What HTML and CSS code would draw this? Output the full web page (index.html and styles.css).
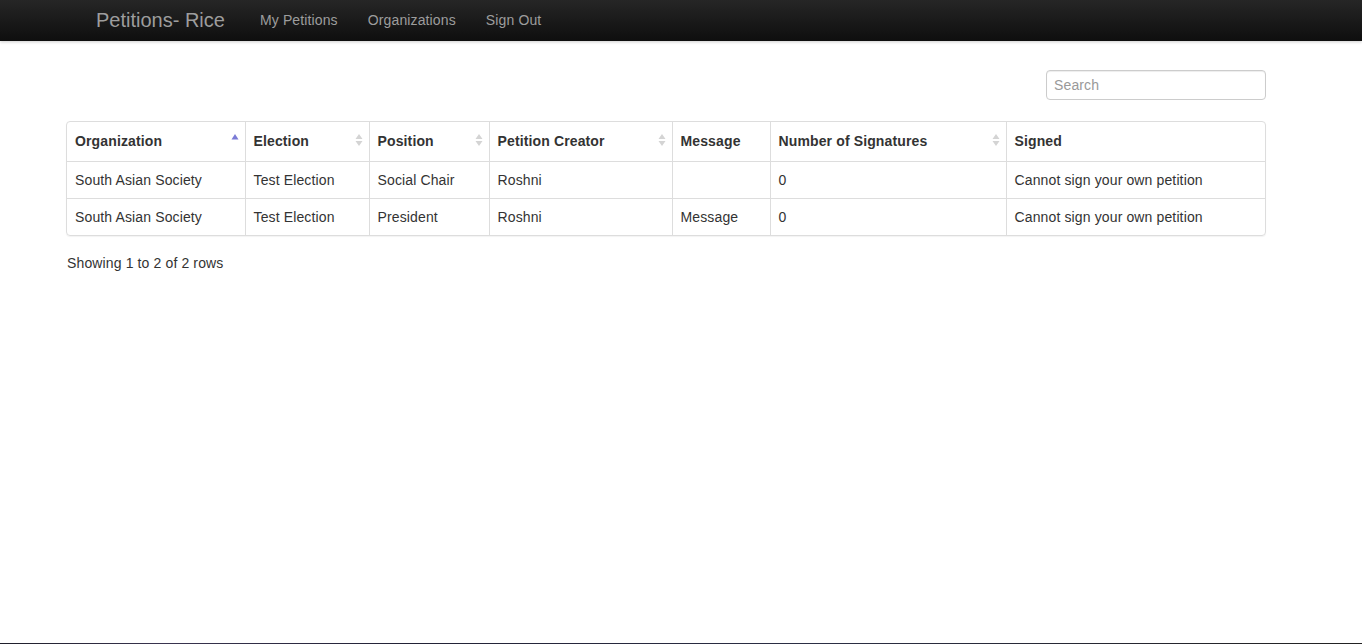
FILE: index.html
```html
<!DOCTYPE html>
<html>
<head>
<meta charset="utf-8">
<title>Petitions- Rice</title>
<link rel="stylesheet" href="styles.css">
</head>
<body>
<nav class="navbar">
  <a class="brand">Petitions- Rice</a>
  <ul class="nav">
    <li><a>My Petitions</a></li>
    <li><a>Organizations</a></li>
    <li><a>Sign Out</a></li>
  </ul>
</nav>
<main class="main">
  <div class="toolbar">
    <input class="search" type="text" placeholder="Search">
  </div>
  <div class="table-box">
    <table class="table">
      <colgroup>
        <col style="width:178px"><col style="width:124px"><col style="width:120px"><col style="width:183px"><col style="width:98px"><col style="width:236px"><col>
      </colgroup>
      <thead>
        <tr>
          <th><div class="th-inner">Organization<svg class="sort" width="8" height="14" viewBox="0 0 8 14"><path d="M0.5 6.5 L4 1 L7.5 6.5 Z" fill="#7b7bd6"/></svg></div></th>
          <th><div class="th-inner">Election<svg class="sort" width="8" height="14" viewBox="0 0 8 14"><path d="M0.5 6 L4 1 L7.5 6 Z M0.5 8 L4 13 L7.5 8 Z" fill="#d4d4d4"/></svg></div></th>
          <th><div class="th-inner">Position<svg class="sort" width="8" height="14" viewBox="0 0 8 14"><path d="M0.5 6 L4 1 L7.5 6 Z M0.5 8 L4 13 L7.5 8 Z" fill="#d4d4d4"/></svg></div></th>
          <th><div class="th-inner">Petition Creator<svg class="sort" width="8" height="14" viewBox="0 0 8 14"><path d="M0.5 6 L4 1 L7.5 6 Z M0.5 8 L4 13 L7.5 8 Z" fill="#d4d4d4"/></svg></div></th>
          <th><div class="th-inner">Message</div></th>
          <th><div class="th-inner">Number of Signatures<svg class="sort" width="8" height="14" viewBox="0 0 8 14"><path d="M0.5 6 L4 1 L7.5 6 Z M0.5 8 L4 13 L7.5 8 Z" fill="#d4d4d4"/></svg></div></th>
          <th><div class="th-inner">Signed</div></th>
        </tr>
      </thead>
      <tbody>
        <tr>
          <td>South Asian Society</td>
          <td>Test Election</td>
          <td>Social Chair</td>
          <td>Roshni</td>
          <td></td>
          <td>0</td>
          <td>Cannot sign your own petition</td>
        </tr>
        <tr>
          <td>South Asian Society</td>
          <td>Test Election</td>
          <td>President</td>
          <td>Roshni</td>
          <td>Message</td>
          <td>0</td>
          <td>Cannot sign your own petition</td>
        </tr>
      </tbody>
    </table>
  </div>
  <div class="pagination-info">Showing 1 to 2 of 2 rows</div>
</main>
<div class="bottom-edge"></div>
</body>
</html>
```

FILE: styles.css
```css
html, body {
  height: 100%;
}
body {
  margin: 0;
  font-family: "Liberation Sans", Arial, sans-serif;
  font-size: 14px;
  line-height: 20px;
  letter-spacing: 0.13px;
  color: #333;
  background: #fff;
  display: flex;
  flex-direction: column;
}
.navbar {
  height: 41px;
  flex: none;
  background: linear-gradient(to bottom, #262626 0%, #0e0e0e 100%);
  box-shadow: 0 1px 3px rgba(0,0,0,0.2);
  display: flex;
  align-items: center;
  padding-left: 96px;
  padding-bottom: 1px;
  box-sizing: border-box;
}
.brand {
  font-size: 20px;
  line-height: 20px;
  letter-spacing: 0;
  color: #9d9d9d;
  padding-right: 20px;
}
.nav {
  list-style: none;
  margin: 0;
  padding: 0;
  display: flex;
}
.nav a {
  display: block;
  padding: 0 15px;
  color: #9d9d9d;
  line-height: 20px;
}
.main {
  flex: 1;
  padding-left: 66px;
  width: 1200px;
}
.toolbar {
  display: flex;
  justify-content: flex-end;
  margin-top: 29px;
  margin-bottom: 21px;
}
.search {
  width: 220px;
  height: 30px;
  box-sizing: border-box;
  border: 1px solid #ccc;
  border-radius: 4px;
  padding: 4px 7px;
  font-family: "Liberation Sans", Arial, sans-serif;
  font-size: 14px;
  letter-spacing: 0.13px;
  color: #555;
  box-shadow: inset 0 1px 1px rgba(0,0,0,0.075);
  outline: none;
}
.search::placeholder {
  color: #999;
}
.table-box {
  border: 1px solid #ddd;
  border-radius: 4px;
  box-shadow: 0 1px 1px rgba(0,0,0,0.05);
  overflow: hidden;
}
.table {
  width: 100%;
  table-layout: fixed;
  border-collapse: collapse;
}
.table th, .table td {
  border-left: 1px solid #ddd;
  text-align: left;
  white-space: nowrap;
}
.table th:first-child, .table td:first-child {
  border-left: none;
}
.table th {
  padding: 0;
  font-weight: bold;
  border-bottom: 1px solid #ddd;
}
.th-inner {
  padding: 8px;
  line-height: 23px;
  display: flex;
  justify-content: space-between;
  align-items: center;
}
.sort {
  margin-right: -2px;
  margin-top: -3px;
}
.table td {
  padding: 8px;
  line-height: 20px;
}
.table tbody tr + tr td {
  border-top: 1px solid #ddd;
}
.pagination-info {
  margin-top: 17px;
  padding-left: 1px;
  line-height: 20px;
}
.bottom-edge {
  flex: none;
  height: 1px;
  background: linear-gradient(to right, #1e1e2a, #3a3550 12%, #222236 30%, #2c2f45 60%, #222 100%);
}
```
